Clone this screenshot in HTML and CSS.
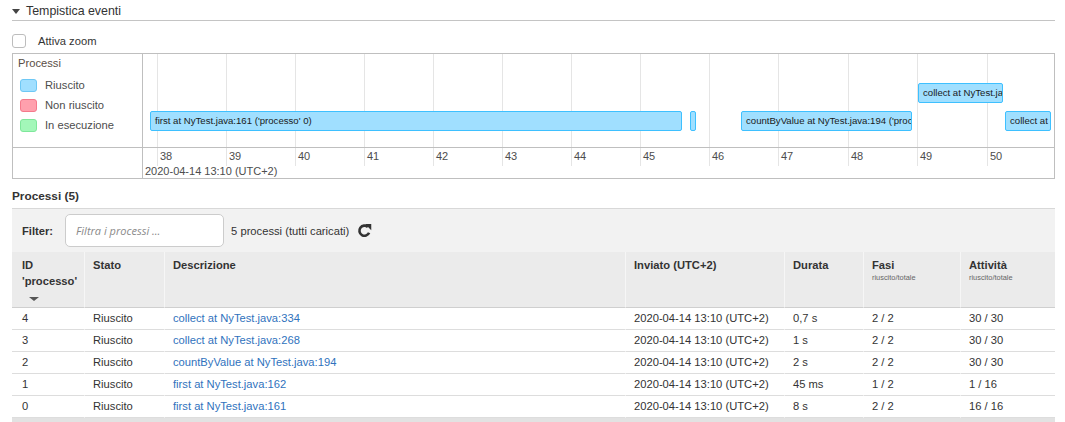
FILE: index.html
```html
<!DOCTYPE html>
<html lang="it">
<head>
<meta charset="utf-8">
<title>Tempistica eventi</title>
<link rel="stylesheet" href="styles.css">
</head>
<body>
<div class="page">
  <div class="section-title"><span class="caret"></span><span>Tempistica eventi</span></div>
  <label class="zoom-toggle"><span class="checkbox"></span><span>Attiva zoom</span></label>

  <div class="timeline">
    <div class="legend">
      <div class="legend-title">Processi</div>
      <div class="legend-list">
        <div class="legend-item"><span class="swatch ok"></span>Riuscito</div>
        <div class="legend-item"><span class="swatch fail"></span>Non riuscito</div>
        <div class="legend-item"><span class="swatch run"></span>In esecuzione</div>
      </div>
    </div>
    <div class="plot">
      <div class="gridline" style="left:14px"></div>
      <div class="gridline" style="left:83px"></div>
      <div class="gridline" style="left:152px"></div>
      <div class="gridline" style="left:221px"></div>
      <div class="gridline" style="left:290px"></div>
      <div class="gridline" style="left:359px"></div>
      <div class="gridline" style="left:428px"></div>
      <div class="gridline" style="left:497px"></div>
      <div class="gridline" style="left:566px"></div>
      <div class="gridline" style="left:635px"></div>
      <div class="gridline" style="left:705px"></div>
      <div class="gridline" style="left:774px"></div>
      <div class="gridline" style="left:844px"></div>

      <div class="bar" style="left:7px;top:57px;width:532px">first at NyTest.java:161 ('processo' 0)</div>
      <div class="bar" style="left:547px;top:57px;width:5px"></div>
      <div class="bar" style="left:598px;top:57px;width:171px">countByValue at NyTest.java:194 ('processo' 2)</div>
      <div class="bar" style="left:775px;top:29px;width:85px">collect at NyTest.java:268 ('processo' 3)</div>
      <div class="bar" style="left:862px;top:57px;width:46px">collect at NyTest.java:334 ('processo' 4)</div>
    </div>
    <div class="axis-blank"></div>
    <div class="axis">
      <div class="tick" style="left:14px">38</div>
      <div class="tick" style="left:83px">39</div>
      <div class="tick" style="left:152px">40</div>
      <div class="tick" style="left:221px">41</div>
      <div class="tick" style="left:290px">42</div>
      <div class="tick" style="left:359px">43</div>
      <div class="tick" style="left:428px">44</div>
      <div class="tick" style="left:497px">45</div>
      <div class="tick" style="left:566px">46</div>
      <div class="tick" style="left:635px">47</div>
      <div class="tick" style="left:705px">48</div>
      <div class="tick" style="left:774px">49</div>
      <div class="tick" style="left:844px">50</div>
      <div class="axis-date">2020-04-14 13:10 (UTC+2)</div>
    </div>
  </div>

  <h4 class="jobs-title">Processi (5)</h4>

  <div class="filter-bar">
    <span class="filter-label">Filter:</span>
    <span class="filter-input">Filtra i processi ...</span>
    <span class="filter-count">5 processi (tutti caricati)</span>
    <svg class="refresh" width="15" height="15" viewBox="0 0 16 16" aria-hidden="true">
      <path d="M12.9 10.4 A5.4 5.4 0 1 1 11.6 4.2" fill="none" stroke="#333" stroke-width="2.8"/>
      <polygon points="15.2,1 15.2,7.6 8.6,1" fill="#333"/>
    </svg>
  </div>

  <table class="jobs">
    <colgroup>
      <col style="width:72px">
      <col style="width:80px">
      <col style="width:461px">
      <col style="width:159px">
      <col style="width:79px">
      <col style="width:97px">
      <col style="width:95px">
    </colgroup>
    <thead>
      <tr>
        <th class="first">ID<br>'processo'<span class="sort-caret"></span></th>
        <th>Stato</th>
        <th>Descrizione</th>
        <th>Inviato (UTC+2)</th>
        <th>Durata</th>
        <th>Fasi<span class="sub">riuscito/totale</span></th>
        <th>Attività<span class="sub">riuscito/totale</span></th>
      </tr>
    </thead>
    <tbody>
      <tr><td class="first">4</td><td>Riuscito</td><td><a href="#">collect at NyTest.java:334</a></td><td>2020-04-14 13:10 (UTC+2)</td><td>0,7 s</td><td>2 / 2</td><td>30 / 30</td></tr>
      <tr><td class="first">3</td><td>Riuscito</td><td><a href="#">collect at NyTest.java:268</a></td><td>2020-04-14 13:10 (UTC+2)</td><td>1 s</td><td>2 / 2</td><td>30 / 30</td></tr>
      <tr><td class="first">2</td><td>Riuscito</td><td><a href="#">countByValue at NyTest.java:194</a></td><td>2020-04-14 13:10 (UTC+2)</td><td>2 s</td><td>2 / 2</td><td>30 / 30</td></tr>
      <tr><td class="first">1</td><td>Riuscito</td><td><a href="#">first at NyTest.java:162</a></td><td>2020-04-14 13:10 (UTC+2)</td><td>45 ms</td><td>1 / 2</td><td>1 / 16</td></tr>
      <tr><td class="first">0</td><td>Riuscito</td><td><a href="#">first at NyTest.java:161</a></td><td>2020-04-14 13:10 (UTC+2)</td><td>8 s</td><td>2 / 2</td><td>16 / 16</td></tr>
    </tbody>
  </table>
  <div class="table-foot"></div>
</div>
</body>
</html>
```

FILE: styles.css
```css
* { box-sizing: border-box; }

body {
  margin: 0;
  font-family: "Liberation Sans", Arial, sans-serif;
  font-size: 11.2px;
  color: #333;
  background: #fff;
}

.page {
  padding: 0 10px 0 12px;
}

.section-title {
  display: flex;
  align-items: center;
  height: 21px;
  padding-top: 2px;
  border-bottom: 1px solid #c4c4c4;
  font-size: 12.4px;
  color: #333;
}

.caret {
  width: 0;
  height: 0;
  border-left: 4px solid transparent;
  border-right: 4px solid transparent;
  border-top: 5px solid #444;
  margin-right: 6px;
}

.zoom-toggle {
  display: flex;
  align-items: center;
  gap: 12px;
  margin-top: 13px;
  height: 14px;
}

.checkbox {
  width: 14px;
  height: 14px;
  border: 1px solid #bdbdbd;
  border-radius: 3px;
  background: #fff;
}

.timeline {
  display: grid;
  grid-template-columns: 130px 1fr;
  grid-template-rows: 94px 30px;
  margin-top: 5px;
  border: 1px solid #bfbfbf;
}

.legend {
  border-right: 1px solid #bfbfbf;
  border-bottom: 1px solid #bfbfbf;
  padding: 2px 0 0 5px;
  color: #5a4e46;
}

.legend-title {
  line-height: 14px;
}

.legend-list {
  margin-top: 5px;
  padding-left: 2px;
}

.legend-item {
  display: flex;
  align-items: center;
  gap: 8px;
  height: 20px;
  color: #4d4d4d;
}

.swatch {
  width: 17px;
  height: 13px;
  border: 1px solid;
  border-radius: 3px;
}

.swatch.ok { background: #a0dfff; border-color: #6ec8f5; }
.swatch.fail { background: #ffa0ad; border-color: #f57a8c; }
.swatch.run { background: #a3f7b9; border-color: #7fe79b; }

.plot {
  position: relative;
  border-bottom: 1px solid #bfbfbf;
  overflow: hidden;
}

.gridline {
  position: absolute;
  top: 0;
  bottom: 0;
  width: 1px;
  background: #e5e5e5;
}

.bar {
  position: absolute;
  height: 20px;
  background: #a0dfff;
  border: 1px solid #3ec0ff;
  border-radius: 2px;
  padding-left: 4px;
  font-size: 9.6px;
  line-height: 18px;
  color: #1a1a1a;
  white-space: nowrap;
  overflow: hidden;
}

.axis-blank {
  border-right: 1px solid #bfbfbf;
}

.axis {
  position: relative;
  color: #4d4d4d;
  font-size: 11px;
}

.tick {
  position: absolute;
  top: 0;
  height: 18px;
  border-left: 1px solid #e5e5e5;
  padding-left: 2px;
  line-height: 16px;
}

.axis-date {
  position: absolute;
  left: 2px;
  top: 15px;
  line-height: 16px;
  white-space: nowrap;
}

.jobs-title {
  margin: 10px 0 0;
  font-size: 11.8px;
  line-height: 14px;
  font-weight: bold;
  color: #333;
}

.filter-bar {
  display: flex;
  align-items: center;
  height: 44px;
  margin-top: 5px;
  padding-left: 10px;
  background: #f2f2f2;
  border-top: 1px solid #d8d8d8;
}

.filter-label {
  font-weight: bold;
}

.filter-input {
  display: flex;
  align-items: center;
  width: 159px;
  height: 33px;
  margin-left: 12px;
  padding-left: 10px;
  background: #fff;
  border: 1px solid #cccccc;
  border-radius: 5px;
  font-family: "Open Sans", "Liberation Sans", sans-serif;
  font-style: italic;
  font-size: 11px;
  color: #8a8a8a;
}

.filter-count {
  margin-left: 7px;
}

.refresh {
  margin-left: 8px;
}

.jobs {
  width: 100%;
  table-layout: fixed;
  border-collapse: separate;
  border-spacing: 0;
}

.jobs th {
  height: 56px;
  padding: 5px 8px 0;
  vertical-align: top;
  text-align: left;
  font-weight: bold;
  line-height: 16px;
  background: #ebebeb;
  border-left: 1px solid #f6f6f6;
  border-bottom: 1px solid #cfcfcf;
}

.jobs th.first {
  border-left: none;
  padding-left: 10px;
}

.sort-caret {
  display: block;
  width: 0;
  height: 0;
  margin: 8px 0 0 7px;
  border-left: 5px solid transparent;
  border-right: 5px solid transparent;
  border-top: 4px solid #555;
}

.sub {
  display: block;
  font-size: 7.4px;
  line-height: 10px;
  font-weight: normal;
  color: #666;
}

.jobs td {
  height: 22px;
  padding: 0 8px;
  line-height: 21px;
  border-left: 1px solid transparent;
  border-bottom: 1px solid #dddddd;
  white-space: nowrap;
}

.jobs td.first {
  border-left: none;
  padding-left: 10px;
}

.jobs a {
  color: #2f72bd;
  text-decoration: none;
}

.table-foot {
  height: 5px;
  background: #e2e2e2;
}
```
